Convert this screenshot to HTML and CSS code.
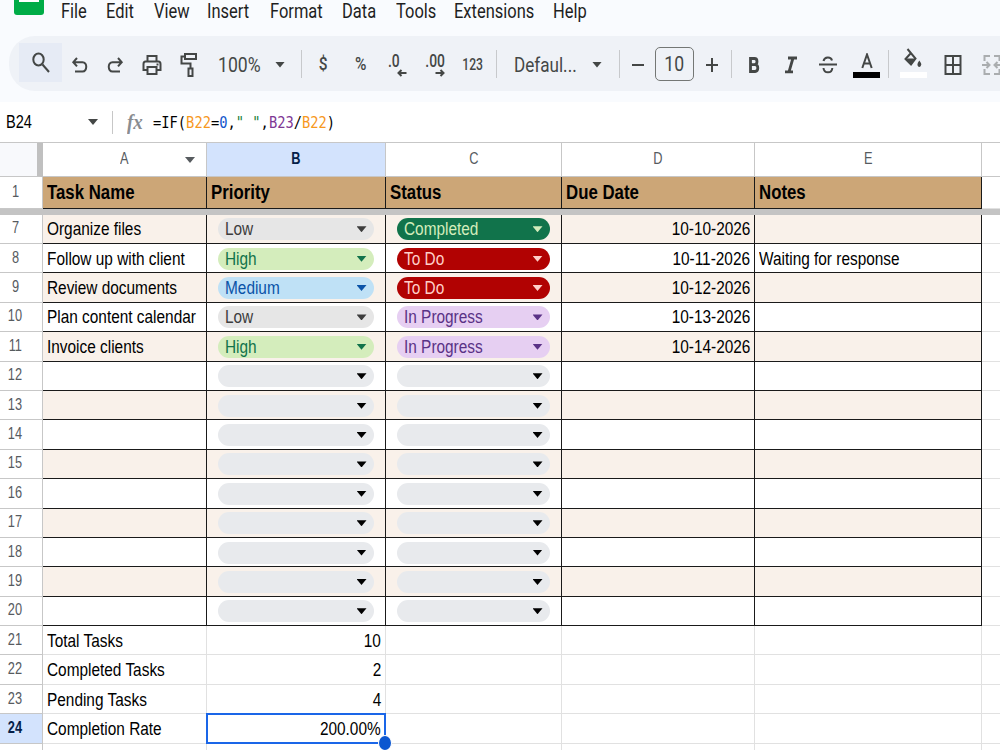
FILE: index.html
```
<!DOCTYPE html>
<html lang="en">
<head>
    <meta charset="UTF-8">
    <meta name="viewport" content="width=device-width, initial-scale=1.0">
    <title>Task Tracker</title>
    <link rel="stylesheet" href="styles.css">
</head>
<body>
    <header class="top">
        <nav class="menu">
            <svg class="logo" width="30" height="15" viewBox="0 0 30 15"><path d="M0 0H30V12Q30 15 27 15H3Q0 15 0 12Z" fill="#00ac47"/><path d="M5 0H25V2H5Z" fill="#fff"/></svg>
            <span>File</span>
            <span>Edit</span>
            <span>View</span>
            <span>Insert</span>
            <span>Format</span>
            <span>Data</span>
            <span>Tools</span>
            <span>Extensions</span>
            <span>Help</span>
        </nav>

        <div class="toolbar">
            <div class="tool search"><svg width="20" height="22" viewBox="0 0 20 22"><ellipse cx="7.500" cy="7.500" rx="5.200" ry="6"/><path d="M11.500 12.500L18 20"/></svg></div>
            <div class="tool"><svg width="18" height="20" viewBox="0 0 18 20"><path d="M6 3L2.300 7.200L6 11.400M2.500 7.200H11.500C16.500 7.200 16.500 16.500 11.500 16.500H4"/></svg></div>
            <div class="tool"><svg width="18" height="20" viewBox="0 0 18 20"><path d="M12 3L15.700 7.200L12 11.400M15.500 7.200H6.500C1.500 7.200 1.500 16.500 6.500 16.500H14"/></svg></div>
            <div class="tool"><svg width="20" height="22" viewBox="0 0 20 22"><path d="M5.500 7V2H14.500V7M5 16H1.500V10Q1.500 7.500 3.500 7.500H16.500Q18.500 7.500 18.500 10V16H15M5.500 13H14.500V20H5.500Z"/><path d="M14.500 10.500H16.500"/></svg></div>
            <div class="tool"><svg width="18" height="26" viewBox="0 0 18 26"><path d="M5 2H16V7H5ZM5 4.500H1.500V11.500H10.500V16M8.500 16.500H12.500V24H8.500Z"/></svg></div>
            <div class="tool zoom"><span class="label">100%</span><i class="caret"></i></div>
            <div class="sep"></div>
            <div class="tool"><span class="sign">$</span></div>
            <div class="tool"><span class="sign">%</span></div>
            <div class="tool decimal less"><b>.0</b><svg width="10" height="8" viewBox="0 0 10 8"><path d="M9.500 4H1.500M4.500 1L1.500 4L4.500 7"/></svg></div>
            <div class="tool decimal"><b>.00</b><svg width="10" height="8" viewBox="0 0 10 8"><path d="M.5 4H8.500M5.500 1L8.500 4L5.500 7"/></svg></div>
            <div class="tool"><span class="num">123</span></div>
            <div class="sep"></div>
            <div class="tool font"><span class="label">Defaul...</span><i class="caret"></i></div>
            <div class="sep"></div>
            <div class="tool"><svg width="14" height="16" viewBox="0 0 14 16"><path d="M1 8H13"/></svg></div>
            <div class="tool size"><span class="label">10</span></div>
            <div class="tool"><svg width="14" height="16" viewBox="0 0 14 16"><path d="M1 8H13M7 1V15"/></svg></div>
            <div class="sep"></div>
            <div class="tool"><svg width="12" height="18" viewBox="0 0 12 18" class="thick"><path d="M2.500 2.500H6.500Q9 2.500 9 5.500T6.500 8.700H2.500ZM2.500 8.700H7Q9.800 8.700 9.800 12T7 15.500H2.500Z"/></svg></div>
            <div class="tool"><svg width="14" height="18" viewBox="0 0 14 18" class="thick"><path d="M4 2H13M1 15.800H9M9 2L5 15.800"/></svg></div>
            <div class="tool"><svg width="20" height="20" viewBox="0 0 20 20"><path d="M1 9.500H19M5.500 6C6.500 1.500 13 1.500 14 5.500M5.500 13C6 18.800 14 18.800 14.300 13"/></svg></div>
            <div class="tool color"><svg width="12" height="16" viewBox="0 0 12 16"><path d="M1.300 15L6 1.500L10.700 15M3 10.500H9"/></svg><i class="swatch"></i></div>
            <div class="sep"></div>
            <div class="tool color fill"><svg width="18" height="20" viewBox="0 0 18 20"><path d="M3.500 1L11.500 10.500L7 16.500L1.500 11L7 5"/><path class="solid" d="M1.500 10.500H11.500L7 17Z"/><path class="solid" d="M15.300 12.500Q17.800 15.500 17.200 17Q16.500 19 15.300 19Q14 19 13.400 17Q13 15.500 15.300 12.500Z"/></svg><i class="swatch white"></i></div>
            <div class="tool"><svg width="18" height="20" viewBox="0 0 18 20"><path d="M1.500 1H16.500V19H1.500ZM9 1V19M1.500 10H16.500"/></svg></div>
            <div class="tool merge"><svg width="20" height="20" viewBox="0 0 20 20"><path d="M8 1H2.500V6M2.500 14V19H8M12 1H17.500V6M17.500 14V19H12M0 10H7M4.500 7L7.500 10L4.500 13M20 10H13M15.500 7L12.500 10L15.500 13"/></svg></div>
        </div>
    </header>

    <div class="formula-bar">
        <div class="name-box"><span>B24</span><i class="caret"></i></div>
        <div class="fx"><span>fx</span></div>
        <div class="formula">=IF(<span class="orange">B22</span>=<span class="blue">0</span>,<span class="green">" "</span>,<span class="purple">B23</span>/<span class="orange">B22</span>)</div>
    </div>

    <main class="sheet">
        <div class="row letters">
            <div class="corner"></div>
            <div><span>A</span><i class="caret"></i></div>
            <div class="active"><span>B</span></div>
            <div><span>C</span></div>
            <div><span>D</span></div>
            <div><span>E</span></div>
            <div></div>
        </div>
        <div class="row task head">
            <div class="n"><span>1</span></div><div><span>Task Name</span></div><div><span>Priority</span></div><div><span>Status</span></div><div><span>Due Date</span></div><div><span>Notes</span></div><div></div>
        </div>
        <div class="freeze"></div>

        <!-- tasks -->
        <div class="row task band">
            <div class="n"><span>7</span></div><div><span>Organize files</span></div>
            <div><p class="chip low"><span>Low</span></p></div><div><p class="chip done"><span>Completed</span></p></div>
            <div class="right"><span>10-10-2026</span></div><div></div><div></div>
        </div>
        <div class="row task">
            <div class="n"><span>8</span></div><div><span>Follow up with client</span></div>
            <div><p class="chip high"><span>High</span></p></div><div><p class="chip todo"><span>To Do</span></p></div>
            <div class="right"><span>10-11-2026</span></div><div><span>Waiting for response</span></div><div></div>
        </div>
        <div class="row task band">
            <div class="n"><span>9</span></div><div><span>Review documents</span></div>
            <div><p class="chip medium"><span>Medium</span></p></div><div><p class="chip todo"><span>To Do</span></p></div>
            <div class="right"><span>10-12-2026</span></div><div></div><div></div>
        </div>
        <div class="row task">
            <div class="n"><span>10</span></div><div><span>Plan content calendar</span></div>
            <div><p class="chip low"><span>Low</span></p></div><div><p class="chip progress"><span>In Progress</span></p></div>
            <div class="right"><span>10-13-2026</span></div><div></div><div></div>
        </div>
        <div class="row task band">
            <div class="n"><span>11</span></div><div><span>Invoice clients</span></div>
            <div><p class="chip high"><span>High</span></p></div><div><p class="chip progress"><span>In Progress</span></p></div>
            <div class="right"><span>10-14-2026</span></div><div></div><div></div>
        </div>

        <!-- empty rows -->
        <div class="row task"><div class="n"><span>12</span></div><div></div><div><p class="chip"></p></div><div><p class="chip"></p></div><div></div><div></div><div></div></div>
        <div class="row task band"><div class="n"><span>13</span></div><div></div><div><p class="chip"></p></div><div><p class="chip"></p></div><div></div><div></div><div></div></div>
        <div class="row task"><div class="n"><span>14</span></div><div></div><div><p class="chip"></p></div><div><p class="chip"></p></div><div></div><div></div><div></div></div>
        <div class="row task band"><div class="n"><span>15</span></div><div></div><div><p class="chip"></p></div><div><p class="chip"></p></div><div></div><div></div><div></div></div>
        <div class="row task"><div class="n"><span>16</span></div><div></div><div><p class="chip"></p></div><div><p class="chip"></p></div><div></div><div></div><div></div></div>
        <div class="row task band"><div class="n"><span>17</span></div><div></div><div><p class="chip"></p></div><div><p class="chip"></p></div><div></div><div></div><div></div></div>
        <div class="row task"><div class="n"><span>18</span></div><div></div><div><p class="chip"></p></div><div><p class="chip"></p></div><div></div><div></div><div></div></div>
        <div class="row task band"><div class="n"><span>19</span></div><div></div><div><p class="chip"></p></div><div><p class="chip"></p></div><div></div><div></div><div></div></div>
        <div class="row task"><div class="n"><span>20</span></div><div></div><div><p class="chip"></p></div><div><p class="chip"></p></div><div></div><div></div><div></div></div>

        <!-- totals -->
        <div class="row"><div class="n"><span>21</span></div><div><span>Total Tasks</span></div><div class="right"><span>10</span></div><div></div><div></div><div></div><div></div></div>
        <div class="row"><div class="n"><span>22</span></div><div><span>Completed Tasks</span></div><div class="right"><span>2</span></div><div></div><div></div><div></div><div></div></div>
        <div class="row"><div class="n"><span>23</span></div><div><span>Pending Tasks</span></div><div class="right"><span>4</span></div><div></div><div></div><div></div><div></div></div>
        <div class="row"><div class="n active"><span>24</span></div><div><span>Completion Rate</span></div><div class="right selected"><span>200.00%</span></div><div></div><div></div><div></div><div></div></div>
        <div class="row"><div class="n"></div><div></div><div></div><div></div><div></div><div></div><div></div></div>
    </main>
</body>
</html>
```
FILE: styles.css
```
* {
    box-sizing: border-box;
}

body {
    margin: 0;
    width: 1000px;
    height: 750px;
    overflow: hidden;
    background-color: #fff;
    color: #000;
    font-family: "Liberation Sans", Arial, sans-serif;
}

span, b {
    white-space: nowrap;
}

.caret {
    display: block;
    flex: none;
    width: 10px;
    height: 6px;
    background-color: #444746;
    clip-path: polygon(0 0, 100% 0, 50% 100%);
}

/* Menu and toolbar */
.top {
    height: 102px;
    background-color: #f9fbfe;
}

.menu {
    display: grid;
    grid-template-columns: 47px 45px 48px 53px 63px 72px 54px 58px 99px 60px;
    height: 36px;
    padding-left: 14px;
    font-family: Roboto, sans-serif;
    font-size: 19.5px;
    line-height: 23px;
    color: #1f1f1f;
}

.menu span {
    transform: scaleX(0.845);
    transform-origin: left;
    height: 23px;
}

.toolbar {
    display: grid;
    grid-template-columns: 43px 35px 36px 38px 35px 94px 2px 42px 33px 39px 38px 38px 8px 118px 2px 35px 39px 36px 2px 43px 31px 44px 33px 11px 38px 41px 38px;
    height: 55px;
    margin-left: 9px;
    padding-left: 10px;
    border-radius: 26px 0 0 26px;
    background-color: #eff2f7;
    color: #444746;
    font-family: Roboto, sans-serif;
    overflow: hidden;
}

.tool {
    display: flex;
    align-items: center;
    justify-content: center;
    padding-top: 2px;
}

.tool svg {
    flex: none;
    fill: none;
    stroke: #444746;
    stroke-width: 2;
}

.tool svg.thick {
    stroke-width: 2.8;
}

.tool svg .solid {
    fill: #444746;
    stroke: none;
}

.search {
    height: 39px;
    margin-top: 7px;
    padding: 0 0 0 1px;
    background-color: #e6ebf5;
}

.sep {
    justify-self: center;
    width: 1px;
    height: 28px;
    margin-top: 14px;
    background-color: #c7c9cc;
}

.label {
    font-size: 20px;
    transform: scaleX(0.88);
}

.zoom, .font {
    justify-content: space-between;
    padding-left: 12px;
    padding-right: 15px;
}

.zoom .label, .font .label {
    transform-origin: left;
}

.font {
    padding-left: 14px;
    padding-right: 16px;
}

.font .label {
    transform: scaleX(0.855);
}

.sign {
    margin-top: -2px;
    font-size: 18px;
    font-weight: 500;
    transform: scaleX(0.86);
}

.num {
    margin-top: -1px;
    font-size: 16px;
    font-weight: 500;
    transform: scaleX(0.76);
}

.decimal {
    flex-direction: column;
    justify-content: flex-start;
    padding-top: 15px;
}

.decimal b {
    font-size: 18.5px;
    font-weight: 500;
    line-height: 20px;
    transform: scaleX(0.75);
}

.decimal svg {
    margin: -2px 0 0 10px;
}

.decimal.less b {
    margin-left: -6px;
}

.size {
    height: 34px;
    margin-top: 11px;
    padding: 0;
    border: 1px solid #747775;
    border-radius: 5px;
}

.color {
    flex-direction: column;
    justify-content: flex-start;
    padding-top: 17px;
}

.swatch {
    width: 27px;
    height: 6px;
    margin-top: 3px;
    background-color: #000;
}

.fill {
    padding-top: 12px;
}

.swatch.white {
    margin-top: 4px;
    background-color: #fff;
}

.merge {
    opacity: 0.4;
}

/* Formula bar */
.formula-bar {
    display: flex;
    align-items: center;
    height: 40px;
}

.name-box {
    display: flex;
    align-items: center;
    justify-content: space-between;
    width: 113px;
    height: 23px;
    padding-left: 6px;
    padding-right: 14px;
    border-right: 1px solid #c7c7c7;
    font-size: 18px;
}

.name-box span {
    transform: scaleX(0.81);
    transform-origin: left;
}

.fx {
    width: 40px;
    padding-left: 14px;
    color: #8a8d91;
    font: italic bold 21px "Liberation Serif", serif;
}

.fx span {
    display: inline-block;
    transform: scaleX(0.9);
    transform-origin: left;
}

.formula {
    font-family: "DejaVu Sans Mono", monospace;
    font-size: 16.5px;
    transform: scaleX(0.833);
    transform-origin: left;
    white-space: nowrap;
}

.orange { color: #f7981d; }
.blue { color: #1155cc; }
.green { color: #188038; }
.purple { color: #7e3794; }

/* Sheet */
.sheet {
    border-top: 1px solid #c7c7c7;
}

.row {
    display: grid;
    grid-template-columns: 43px 164px 179px 176px 193px 227px 18px;
    height: 29.4px;
    font-size: 18.67px;
}

.row > div {
    display: flex;
    align-items: center;
    padding: 1px 4px 0;
    border-right: 1px solid #e1e1e1;
    border-bottom: 1px solid #e1e1e1;
}

.row > div:last-child {
    border-right: none;
}

.row span {
    transform: scaleX(0.825);
    transform-origin: left;
}

.row > .right {
    justify-content: flex-end;
}

.row > .right span {
    transform-origin: right;
}

.row > .n {
    padding: 0 12px 1px 0;
    justify-content: center;
    border-color: #c7c7c7;
    font-size: 16px;
    color: #575b5f;
}

.row > .n span, .row.letters span {
    transform: scaleX(0.8);
    transform-origin: center;
}

.row > .n.active, .row.letters .active {
    background-color: #d3e3fd;
    color: #041e49;
    font-weight: bold;
}

.row.letters {
    height: 34px;
    font-size: 16px;
    color: #575b5f;
}

.row.letters > div {
    position: relative;
    justify-content: center;
    padding: 0 0 1px;
    border-color: #c7c7c7;
}

.letters .caret {
    position: absolute;
    right: 11px;
    top: 14px;
    background-color: #575b5f;
}

.row.letters .corner {
    border-right: 6px solid #c0c0c0;
    background-color: #f8f9fc;
}

.task > div:not(.n):not(:last-child) {
    border-color: #1a1a1a;
}

.band > div:not(.n):not(:last-child) {
    background-color: #f9f1ea;
}

.row.head {
    height: 32px;
    font-size: 20px;
    font-weight: bold;
}

.head > div {
    padding-top: 0;
    padding-bottom: 1px;
}

.head > div:not(.n) span {
    transform: scaleX(0.84);
}

.head > div:not(.n):not(:last-child) {
    background-color: #cca677;
}

.row.head > .n {
    font-weight: normal;
    padding-bottom: 1px;
}

.freeze {
    height: 5.6px;
    background-color: #c4c4c4;
}

.chip {
    display: flex;
    align-items: center;
    justify-content: space-between;
    width: 100%;
    height: 22px;
    margin: 0 7px 0 6.5px;
    padding: 0 7.5px 0 7px;
    border-radius: 11px;
    background-color: #e8eaed;
}

.chip::after {
    content: "";
    width: 10px;
    height: 6px;
    margin-left: auto;
    background-color: currentColor;
    clip-path: polygon(0 0, 100% 0, 50% 100%);
}

.low {
    background-color: #e6e6e6;
    color: #3d3d3d;
}

.high {
    background-color: #d4edbc;
    color: #11734b;
}

.medium {
    background-color: #bfe1f6;
    color: #0a53a8;
}

.done {
    background-color: #11734b;
    color: #d4edbc;
}

.todo {
    background-color: #b10202;
    color: #ffcfc9;
}

.progress {
    background-color: #e6cff2;
    color: #5a3286;
}

.row > .selected {
    position: relative;
}

/* Selection frame and its fill handle */
.selected::before {
    content: "";
    position: absolute;
    inset: -1px -1px -1px -1px;
    border: 2px solid #1a66e8;
}

.selected::after {
    content: "";
    position: absolute;
    z-index: 1;
    right: -7px;
    bottom: -8px;
    width: 12px;
    height: 14px;
    border: 1px solid #fff;
    border-radius: 50%;
    background-color: #0b57d0;
}
```
